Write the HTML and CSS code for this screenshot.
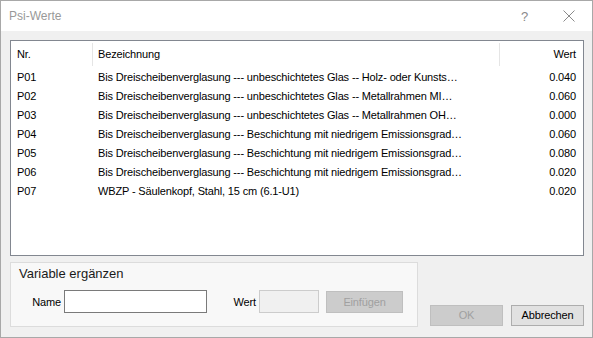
FILE: index.html
```html
<!DOCTYPE html>
<html>
  <head>
    <meta charset="utf-8" />
    <title>Psi-Werte</title>
    <link rel="stylesheet" href="styles.css">
  </head>
  <body>
    <div class="window">
      <div class="titlebar">
        <span class="title">Psi-Werte</span>
        <span class="help">?</span>
        <svg class="close" width="12" height="12" viewBox="0 0 12 12">
          <path d="M0.5 0.5 L11.5 11.5 M11.5 0.5 L0.5 11.5" stroke="#8a8a8a" stroke-width="1" fill="none" />
        </svg>
      </div>
      <div class="content">
        <div class="list">
          <div class="head">
            <div class="hc c1">Nr.</div>
            <div class="sep"></div>
            <div class="hc c2">Bezeichnung</div>
            <div class="sep"></div>
            <div class="hc c3">Wert</div>
          </div>
          <div class="row"><div class="c1">P01</div><div class="c2">Bis Dreischeibenverglasung --- unbeschichtetes Glas -- Holz- oder Kunsts…</div><div class="c3">0.040</div></div>
          <div class="row"><div class="c1">P02</div><div class="c2">Bis Dreischeibenverglasung --- unbeschichtetes Glas -- Metallrahmen MI…</div><div class="c3">0.060</div></div>
          <div class="row"><div class="c1">P03</div><div class="c2">Bis Dreischeibenverglasung --- unbeschichtetes Glas -- Metallrahmen OH…</div><div class="c3">0.000</div></div>
          <div class="row"><div class="c1">P04</div><div class="c2">Bis Dreischeibenverglasung --- Beschichtung mit niedrigem Emissionsgrad…</div><div class="c3">0.060</div></div>
          <div class="row"><div class="c1">P05</div><div class="c2">Bis Dreischeibenverglasung --- Beschichtung mit niedrigem Emissionsgrad…</div><div class="c3">0.080</div></div>
          <div class="row"><div class="c1">P06</div><div class="c2">Bis Dreischeibenverglasung --- Beschichtung mit niedrigem Emissionsgrad…</div><div class="c3">0.020</div></div>
          <div class="row"><div class="c1">P07</div><div class="c2">WBZP - Säulenkopf, Stahl, 15 cm (6.1-U1)</div><div class="c3">0.020</div></div>
        </div>
        <div class="bottom">
          <div class="group">
            <div class="group-title">Variable ergänzen</div>
            <div class="form">
              <label class="lbl name-lbl">Name</label>
              <div class="input name-input"></div>
              <label class="lbl wert-lbl">Wert</label>
              <div class="input wert-input"></div>
              <div class="btn disabled insert">Einfügen</div>
            </div>
          </div>
          <div class="actions">
            <div class="btn disabled">OK</div>
            <div class="btn">Abbrechen</div>
          </div>
        </div>
      </div>
    </div>
  </body>
</html>
```

FILE: styles.css
```css
html, body {
  margin: 0;
  padding: 0;
  background: #f0f0f0;
}
body {
  font-family: "Liberation Sans", Arial, sans-serif;
  font-size: 11px;
  letter-spacing: -0.15px;
  color: #000;
}
.window {
  width: 593px;
  height: 338px;
  box-sizing: border-box;
  border: 1px solid #a8a8a8;
  background: #f0f0f0;
  display: flex;
  flex-direction: column;
}
.titlebar {
  height: 30px;
  background: #fff;
  display: flex;
  align-items: center;
}
.title {
  margin-left: 8px;
  color: #999;
  font-size: 12px;
  letter-spacing: 0;
  flex: 1;
}
.help {
  color: #8a8a8a;
  font-size: 13px;
  margin-right: 35px;
}
.close {
  margin-right: 17px;
}
.content {
  flex: 1;
  padding: 9px 8px 0 9px;
  display: flex;
  flex-direction: column;
}
.list {
  height: 216px;
  box-sizing: border-box;
  border: 1px solid #828790;
  background: #fff;
}
.head {
  display: flex;
  height: 26px;
}
.hc {
  line-height: 27px;
}
.sep {
  width: 1px;
  height: 23px;
  margin-top: 2px;
  background: #e5e5e5;
}
.c1 {
  width: 75px;
  padding-left: 6px;
  flex: none;
}
.c2 {
  width: 401px;
  padding-left: 5px;
  flex: none;
  white-space: nowrap;
  overflow: hidden;
}
.c3 {
  flex: 1;
  text-align: right;
  padding-right: 7px;
}
.row {
  display: flex;
  height: 19px;
  line-height: 20px;
}
.row .c1 {
  width: 76px;
}
.row .c2 {
  width: 402px;
}
.bottom {
  display: flex;
  margin-top: 6px;
}
.group {
  width: 408px;
  height: 65px;
  box-sizing: border-box;
  border: 1px solid #dcdcdc;
  background: #f8f8f8;
  padding: 1px 0 0 8px;
}
.group-title {
  font-size: 13px;
  letter-spacing: 0;
  line-height: 20px;
  color: #1a1a1a;
}
.form {
  display: flex;
  align-items: center;
  margin-top: 6px;
}
.lbl {
  text-align: right;
}
.name-lbl {
  width: 42px;
}
.input {
  height: 23px;
  box-sizing: border-box;
  border: 1px solid #7a7a7a;
  background: #fff;
  margin-left: 3px;
}
.name-input {
  width: 143px;
}
.wert-lbl {
  width: 49px;
}
.wert-input {
  width: 60px;
  border-color: #cccccc;
  background: #f0f0f0;
}
.btn {
  width: 73px;
  height: 21px;
  box-sizing: border-box;
  border: 1px solid #adadad;
  background: #e1e1e1;
  text-align: center;
  line-height: 19px;
}
.btn.disabled {
  background: #cccccc;
  border-color: #bfbfbf;
  color: #a0a0a0;
}
.insert {
  width: 77px;
  height: 22px;
  margin-left: 7px;
  line-height: 20px;
}
.actions {
  display: flex;
  gap: 8px;
  align-self: flex-end;
  margin-left: auto;
  margin-bottom: 1px;
}
```
